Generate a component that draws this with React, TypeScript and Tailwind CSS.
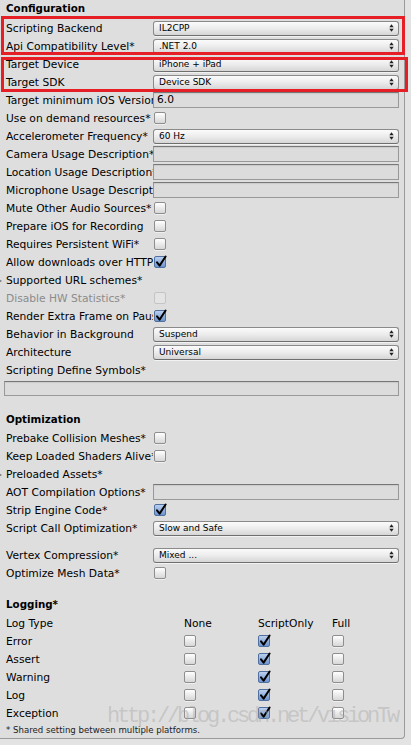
import React from "react";

const Arrows = () => (
  <svg width="5" height="8" viewBox="0 0 5 8" className="shrink-0">
    <polygon points="0.3,3.3 2.5,0.3 4.7,3.3" fill="#222" />
    <polygon points="0.3,4.7 4.7,4.7 2.5,7.7" fill="#222" />
  </svg>
);

const Dropdown = ({ value }: { value: string }) => (
  <div className="flex h-[15px] w-full items-center justify-between rounded-[3px] border border-[#8a8a8a] border-b-[#6f6f6f] bg-linear-to-b from-[#fbfbfb] via-[#ececec] to-[#d6d6d6] pl-[5px] pr-[4px] text-[9px] leading-[12px] text-black shadow-[0_1px_0_rgba(255,255,255,0.6)]">
    <span className="whitespace-nowrap">{value}</span>
    <Arrows />
  </div>
);

const Checkbox = ({ checked, disabled }: { checked?: boolean; disabled?: boolean }) => {
  if (disabled)
    return <div className="h-[12px] w-[12px] shrink-0 rounded-[2px] border border-[#c4c4c4] bg-[#e4e4e4]" />;
  if (checked)
    return (
      <div className="relative h-[12px] w-[12px] shrink-0 rounded-[2px] border border-[#50709f] bg-linear-to-b from-[#bcd0ee] to-[#6e94cf]">
        <svg width="12" height="13" viewBox="0 0 12 13" className="absolute left-[-0.5px] top-[-2px]">
          <path d="M2 7.3 L4.6 10.6 L10.6 1.5" stroke="#000" strokeWidth="2" fill="none" strokeLinecap="round" strokeLinejoin="round" />
        </svg>
      </div>
    );
  return (
    <div className="h-[12px] w-[12px] shrink-0 rounded-[2px] border border-[#8e8e8e] bg-linear-to-b from-[#ffffff] to-[#d7d7d7] shadow-[0_1px_0_rgba(255,255,255,0.5)]" />
  );
};

const TextField = ({ value }: { value?: string }) => (
  <div className="flex h-[16px] w-full items-center border border-[#999] border-t-[#777] bg-[#dcdcdc] pl-[3px] shadow-[inset_0_1px_1px_rgba(0,0,0,0.08)]">
    {value}
  </div>
);

const Fold = () => (
  <svg width="6" height="8" viewBox="0 0 6 8" className="shrink-0">
    <polygon points="-3,1 2,4 -3,7" fill="#7a7a7a" />
  </svg>
);

const Row = ({
  label,
  children,
  disabled,
  foldout,
}: {
  label: string;
  children?: React.ReactNode;
  disabled?: boolean;
  foldout?: boolean;
}) => (
  <div className="flex h-[18px] items-center">
    <div
      className={`flex h-[18px] w-[153px] shrink-0 items-center overflow-hidden whitespace-nowrap pt-[1px] ${
        foldout ? "" : "pl-[6px]"
      } ${disabled ? "text-[#8b8b8b]" : ""}`}
    >
      {foldout && <Fold />}
      <span>{label}</span>
    </div>
    <div className="flex min-w-0 flex-1 items-center pl-[1px] pr-[5px]">{children}</div>
  </div>
);

const DRow = ({ label, value }: { label: string; value: string }) => (
  <div className="flex h-[18px] items-center">
    <div className="flex h-[18px] w-[153px] shrink-0 items-center overflow-hidden whitespace-nowrap pl-[6px] pt-[1px]">{label}</div>
    <div className="flex min-w-0 flex-1 items-center pr-[5px]">
      <Dropdown value={value} />
    </div>
  </div>
);

const FRow = ({ label, value }: { label: string; value?: string }) => (
  <div className="flex h-[18px] items-center">
    <div className="flex h-[18px] w-[153px] shrink-0 items-center overflow-hidden whitespace-nowrap pl-[6px] pt-[1px]">{label}</div>
    <div className="flex min-w-0 flex-1 items-center pr-[5px]">
      <TextField value={value} />
    </div>
  </div>
);

const LogRow = ({ label }: { label: string }) => (
  <div className="grid h-[18px] grid-cols-[184px_74px_74px_1fr] items-center">
    <div className="pl-[6px] pt-[1px]">{label}</div>
    <Checkbox />
    <Checkbox checked />
    <Checkbox />
  </div>
);

export default function App() {
  return (
    <div className="relative h-[745px] w-[411px] overflow-hidden bg-[#e3e3e3] font-['DejaVu_Sans',sans-serif] text-[10.7px] leading-[14px] text-black">
      <div className="flex h-[739px] w-[405px] flex-col rounded-br-[4px] border-r border-b border-[#9a9a9a] bg-[#dedede]">
        <div className="flex h-[19px] items-center pb-[3px] pl-[6px] text-[10.3px] font-bold">Configuration</div>
        <DRow label="Scripting Backend" value="IL2CPP" />
        <DRow label="Api Compatibility Level*" value=".NET 2.0" />
        <DRow label="Target Device" value="iPhone + iPad" />
        <DRow label="Target SDK" value="Device SDK" />
        <FRow label="Target minimum iOS Version" value="6.0" />
        <Row label="Use on demand resources*">
          <Checkbox />
        </Row>
        <DRow label="Accelerometer Frequency*" value="60 Hz" />
        <FRow label="Camera Usage Description*" />
        <FRow label="Location Usage Description*" />
        <FRow label="Microphone Usage Description*" />
        <Row label="Mute Other Audio Sources*">
          <Checkbox />
        </Row>
        <Row label="Prepare iOS for Recording">
          <Checkbox />
        </Row>
        <Row label="Requires Persistent WiFi*">
          <Checkbox />
        </Row>
        <Row label="Allow downloads over HTTP (nonsecure)*">
          <Checkbox checked />
        </Row>
        <Row label="Supported URL schemes*" foldout />
        <Row label="Disable HW Statistics*" disabled>
          <Checkbox disabled />
        </Row>
        <Row label="Render Extra Frame on Pause*">
          <Checkbox checked />
        </Row>
        <DRow label="Behavior in Background" value="Suspend" />
        <DRow label="Architecture" value="Universal" />
        <Row label="Scripting Define Symbols*" />
        <div className="mt-[2px] h-[15px] pl-[4px] pr-[5px]">
          <div className="h-[15px] w-full border border-[#999] border-t-[#777] bg-[#dcdcdc] shadow-[inset_0_1px_1px_rgba(0,0,0,0.08)]" />
        </div>

        <div className="mt-[13px] flex h-[20px] items-center pl-[6px] text-[10.3px] font-bold">Optimization</div>
        <Row label="Prebake Collision Meshes*">
          <Checkbox />
        </Row>
        <Row label="Keep Loaded Shaders Alive*">
          <Checkbox />
        </Row>
        <Row label="Preloaded Assets*" foldout />
        <FRow label="AOT Compilation Options*" />
        <Row label="Strip Engine Code*">
          <Checkbox checked />
        </Row>
        <DRow label="Script Call Optimization*" value="Slow and Safe" />
        <div className="mt-[9px]">
          <DRow label="Vertex Compression*" value="Mixed ..." />
        </div>
        <Row label="Optimize Mesh Data*">
          <Checkbox />
        </Row>

        <div className="mt-[12px] flex h-[20px] items-center pl-[6px] text-[10.3px] font-bold">Logging*</div>
        <div className="grid h-[18px] grid-cols-[184px_74px_74px_1fr] items-center pt-[1px]">
          <div className="pl-[6px]">Log Type</div>
          <div>None</div>
          <div>ScriptOnly</div>
          <div>Full</div>
        </div>
        <LogRow label="Error" />
        <LogRow label="Assert" />
        <LogRow label="Warning" />
        <LogRow label="Log" />
        <LogRow label="Exception" />
        <div className="flex h-[16px] items-center pl-[6px] text-[8.6px] leading-[12px] text-[#222]">
          * Shared setting between multiple platforms.
        </div>
      </div>

      <div className="pointer-events-none absolute left-[107px] top-[705px] whitespace-nowrap font-['Liberation_Mono',monospace] text-[22px] leading-[24px] tracking-[-3.2px] text-[#a8a8a8]/45">
        http://blog.csdn.net/visionTw
      </div>

      <div className="pointer-events-none absolute left-[1px] top-[16px] h-[39px] w-[404px] border-[3px] border-[#e61e25]" />
      <div className="pointer-events-none absolute left-[1px] top-[57px] h-[35px] w-[407px] border-[3px] border-[#e61e25]" />
    </div>
  );
}
